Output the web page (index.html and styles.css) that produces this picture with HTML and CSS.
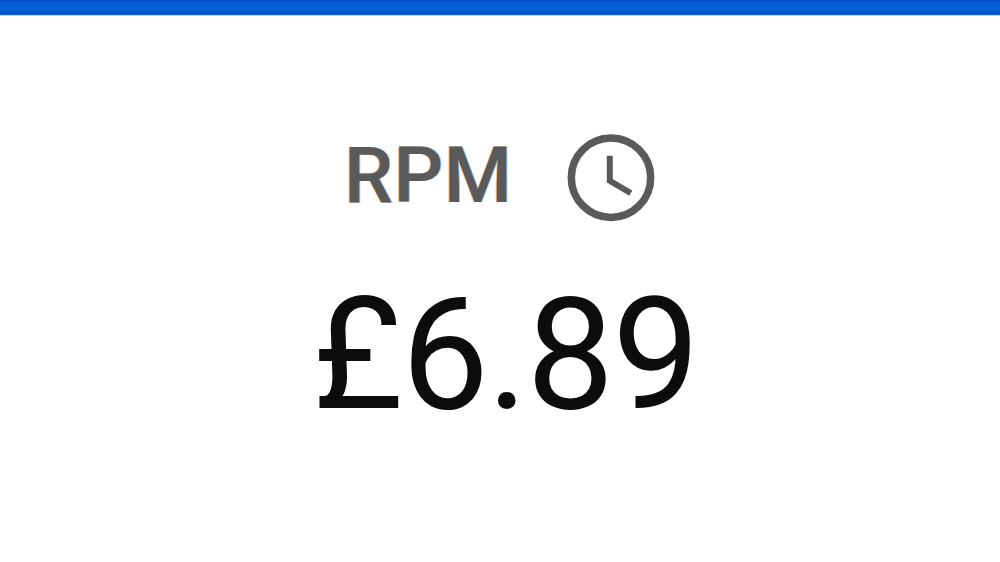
FILE: index.html
```html
<!DOCTYPE html>
<html lang="en">
<head>
<meta charset="utf-8">
<title>RPM</title>
<link rel="stylesheet" href="styles.css">
</head>
<body>
<div class="accent-bar"></div>
<main class="card">
  <div class="metric-header">
    <span class="metric-label">RPM</span>
    <svg class="clock" viewBox="0 0 88 88" aria-hidden="true">
      <circle cx="44" cy="43.7" r="39.7"/>
      <path class="hands" d="M42.8 21.8v25l21 12.3"/>
    </svg>
  </div>
  <div class="metric-value">£6.89</div>
</main>
</body>
</html>
```
FILE: styles.css
```css
body {
  margin: 0;
  background: #fff;
  font-family: Roboto, sans-serif;
}

.accent-bar {
  height: 16px;
  background: linear-gradient(#004ecb 0 2px, #075fd5 2px 11px, #004fcc 11px 14px, #1663d2 14px 15px, #bdd8f7 15px);
}

.card {
  box-sizing: border-box;
  height: 546px;
  padding-top: 117.5px;
  overflow: hidden;
}

.metric-header {
  display: flex;
  height: 90px;
  padding-left: 344px;
}

.metric-label {
  width: 223px;
  font-size: 78px;
  font-weight: 500;
  line-height: 84px;
  letter-spacing: 0.4px;
  color: #5a5a5a;
  text-shadow: -1px 0 rgba(255, 170, 85, 0.7), 1px 0 rgba(80, 165, 245, 0.7);
}

.clock {
  width: 88px;
  height: 88px;
  fill: none;
  stroke: #5a5a5a;
  stroke-width: 7.5;
}

.hands {
  stroke-width: 6;
}

.metric-value {
  margin-top: 39.5px;
  padding-left: 312.3px;
  font-size: 156px;
  font-weight: 400;
  line-height: 184px;
  letter-spacing: -1.8px;
  white-space: nowrap;
  color: #0c0c0c;
}
```
